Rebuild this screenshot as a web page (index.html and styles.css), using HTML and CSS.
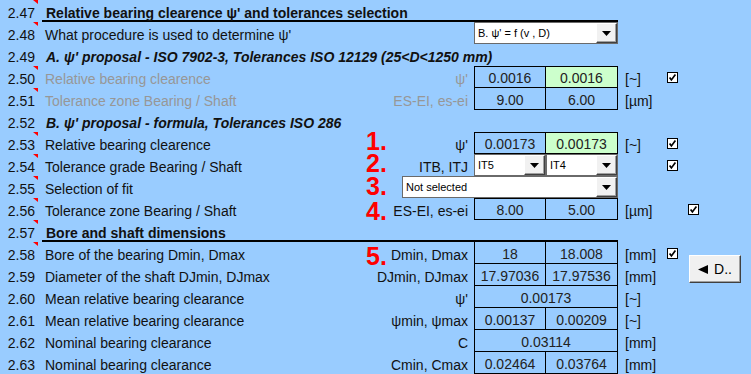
FILE: index.html
```html
<!DOCTYPE html>
<html>
<head>
<meta charset="utf-8">
<link rel="stylesheet" href="styles.css">
</head>
<body>
<div class="sheet">
  <div class="row">
    <div class="num mark">2.47</div>
    <div class="head">Relative bearing clearence ψ' and tolerances selection</div>
  </div>
  <div class="row">
    <div class="num mark">2.48</div>
    <div class="label span2">What procedure is used to determine ψ'</div>
    <div class="dd dd-main"><span class="dd-text">B. ψ' = f (v , D)</span><span class="dd-btn"><svg width="9" height="5" viewBox="0 0 9 5"><path d="M0 0H9L4.5 5Z"/></svg></span></div>
  </div>
  <div class="row">
    <div class="num">2.49</div>
    <div class="label sub">A. ψ' proposal - ISO 7902-3, Tolerances ISO 12129 (25&lt;D&lt;1250 mm)</div>
  </div>
  <div class="row">
    <div class="num mark">2.50</div>
    <div class="label muted">Relative bearing clearence</div>
    <div class="rlabel muted">ψ'</div>
    <div class="val c1 top">0.0016</div>
    <div class="val c2 top green">0.0016</div>
    <div class="unit">[~]</div>
    <div class="chk"><svg width="11" height="11" viewBox="0 0 11 11"><rect x="0.5" y="0.5" width="10" height="10" fill="#fff" stroke="#000"/><path d="M2.6 5.4L4.4 7.9L8.4 2.6" fill="none" stroke="#000" stroke-width="1.7"/></svg></div>
  </div>
  <div class="row">
    <div class="num mark">2.51</div>
    <div class="label muted">Tolerance zone Bearing / Shaft</div>
    <div class="rlabel muted">ES-EI, es-ei</div>
    <div class="val c1">9.00</div>
    <div class="val c2">6.00</div>
    <div class="unit">[µm]</div>
  </div>
  <div class="row">
    <div class="num">2.52</div>
    <div class="label sub">B. ψ' proposal - formula, Tolerances ISO 286</div>
  </div>
  <div class="row">
    <div class="num mark">2.53</div>
    <div class="label">Relative bearing clearence</div>
    <div class="rlabel"><span class="redn n1">1.</span>ψ'</div>
    <div class="val c1 top">0.00173</div>
    <div class="val c2 top green">0.00173</div>
    <div class="unit">[~]</div>
    <div class="chk"><svg width="11" height="11" viewBox="0 0 11 11"><rect x="0.5" y="0.5" width="10" height="10" fill="#fff" stroke="#000"/><path d="M2.6 5.4L4.4 7.9L8.4 2.6" fill="none" stroke="#000" stroke-width="1.7"/></svg></div>
  </div>
  <div class="row">
    <div class="num mark">2.54</div>
    <div class="label">Tolerance grade Bearing / Shaft</div>
    <div class="rlabel"><span class="redn n2">2.</span>ITB, ITJ</div>
    <div class="dd dd-c1"><span class="dd-text">IT5</span><span class="dd-btn"><svg width="9" height="5" viewBox="0 0 9 5"><path d="M0 0H9L4.5 5Z"/></svg></span></div>
    <div class="dd dd-c2"><span class="dd-text">IT4</span><span class="dd-btn"><svg width="9" height="5" viewBox="0 0 9 5"><path d="M0 0H9L4.5 5Z"/></svg></span></div>
    <div class="chk"><svg width="11" height="11" viewBox="0 0 11 11"><rect x="0.5" y="0.5" width="10" height="10" fill="#fff" stroke="#000"/><path d="M2.6 5.4L4.4 7.9L8.4 2.6" fill="none" stroke="#000" stroke-width="1.7"/></svg></div>
  </div>
  <div class="row">
    <div class="num mark">2.55</div>
    <div class="label">Selection of fit</div>
    <div class="rlabel"><span class="redn n3">3.</span></div>
    <div class="dd dd-fit"><span class="dd-text">Not selected</span><span class="dd-btn"><svg width="9" height="5" viewBox="0 0 9 5"><path d="M0 0H9L4.5 5Z"/></svg></span></div>
  </div>
  <div class="row">
    <div class="num mark">2.56</div>
    <div class="label">Tolerance zone Bearing / Shaft</div>
    <div class="rlabel"><span class="redn n4">4.</span>ES-EI, es-ei</div>
    <div class="val c1 top">8.00</div>
    <div class="val c2 top">5.00</div>
    <div class="unit">[µm]</div>
    <div class="chk chk-far"><svg width="11" height="11" viewBox="0 0 11 11"><rect x="0.5" y="0.5" width="10" height="10" fill="#fff" stroke="#000"/><path d="M2.6 5.4L4.4 7.9L8.4 2.6" fill="none" stroke="#000" stroke-width="1.7"/></svg></div>
  </div>
  <div class="row">
    <div class="num mark">2.57</div>
    <div class="head">Bore and shaft dimensions</div>
  </div>
  <div class="row">
    <div class="num mark">2.58</div>
    <div class="label">Bore of the bearing Dmin, Dmax</div>
    <div class="rlabel"><span class="redn n5">5.</span>Dmin, Dmax</div>
    <div class="val c1">18</div>
    <div class="val c2">18.008</div>
    <div class="unit">[mm]</div>
    <div class="chk"><svg width="11" height="11" viewBox="0 0 11 11"><rect x="0.5" y="0.5" width="10" height="10" fill="#fff" stroke="#000"/><path d="M2.6 5.4L4.4 7.9L8.4 2.6" fill="none" stroke="#000" stroke-width="1.7"/></svg></div>
  </div>
  <div class="row">
    <div class="num">2.59</div>
    <div class="label">Diameter of the shaft DJmin, DJmax</div>
    <div class="rlabel">DJmin, DJmax</div>
    <div class="val c1">17.97036</div>
    <div class="val c2">17.97536</div>
    <div class="unit">[mm]</div>
  </div>
  <div class="row">
    <div class="num">2.60</div>
    <div class="label">Mean relative bearing clearance</div>
    <div class="rlabel">ψ'</div>
    <div class="val merged">0.00173</div>
    <div class="unit">[~]</div>
  </div>
  <div class="row">
    <div class="num">2.61</div>
    <div class="label">Mean relative bearing clearance</div>
    <div class="rlabel">ψmin, ψmax</div>
    <div class="val c1">0.00137</div>
    <div class="val c2">0.00209</div>
    <div class="unit">[~]</div>
  </div>
  <div class="row">
    <div class="num">2.62</div>
    <div class="label">Nominal bearing clearance</div>
    <div class="rlabel">C</div>
    <div class="val merged">0.03114</div>
    <div class="unit">[mm]</div>
  </div>
  <div class="row">
    <div class="num">2.63</div>
    <div class="label">Nominal bearing clearance</div>
    <div class="rlabel">Cmin, Cmax</div>
    <div class="val c1">0.02464</div>
    <div class="val c2">0.03764</div>
    <div class="unit">[mm]</div>
  </div>
  <div class="btn"><svg width="10" height="9" viewBox="0 0 10 9"><path d="M0 4.5L10 0V9Z"/></svg><span>D..</span></div>
</div>
</body>
</html>
```

FILE: styles.css
```css
* { box-sizing: border-box; }
html, body {
  margin: 0;
  padding: 0;
  background: #99ccff;
  overflow: hidden;
}
.sheet {
  position: relative;
  width: 751px;
  height: 374px;
  font-family: "Liberation Sans", Arial, sans-serif;
  font-size: 14px;
  color: #111;
}
.row {
  display: grid;
  grid-template-columns: 38px 324px 112px 72px 72px 44px 1fr;
  grid-template-rows: 22px;
  height: 22px;
}
.row > div { grid-row: 1; white-space: nowrap; }
.num {
  grid-column: 1;
  position: relative;
  text-align: right;
  padding-right: 3px;
  padding-top: 4px;
  line-height: 18px;
}
.mark::after {
  content: "";
  position: absolute;
  top: 0;
  right: 0;
  width: 0;
  height: 0;
  border-top: 4px solid #ff0000;
  border-left: 5px solid transparent;
}
.label {
  grid-column: 2;
  padding-left: 7px;
  padding-top: 4px;
  line-height: 18px;
}
.label.span2 { grid-column: 2 / 4; }
.label.sub {
  grid-column: 2 / -1;
  font-weight: bold;
  font-style: italic;
  padding-left: 8px;
}
.head {
  grid-column: 2 / 6;
  margin-left: 4px;
  padding-left: 4px;
  padding-top: 4px;
  line-height: 18px;
  font-weight: bold;
  border-bottom: 2px solid #000;
}
.muted { color: #979797; }
.rlabel {
  grid-column: 3;
  position: relative;
  text-align: right;
  padding-right: 6px;
  padding-top: 4px;
  line-height: 18px;
}
.redn {
  position: absolute;
  left: 4px;
  font-size: 25px;
  line-height: 20px;
  font-weight: bold;
  color: #ff0000;
}
.n1 { top: -1px; }
.n2 { top: -1px; }
.n3 { top: 0; }
.n4 { top: 3px; }
.n5 { top: 4px; }
.val {
  text-align: center;
  padding-top: 3px;
  line-height: 18px;
  border-right: 1px solid #000;
  border-bottom: 1px solid #000;
  color: #222;
}
.val.top { border-top: 1px solid #000; padding-top: 2px; }
.c1 { grid-column: 4; border-left: 1px solid #000; }
.c2 { grid-column: 5; }
.merged { grid-column: 4 / 6; border-left: 1px solid #000; }
.green { background: #ccffcc; }
.unit {
  grid-column: 6;
  padding-left: 7px;
  padding-top: 4px;
  line-height: 18px;
}
.chk {
  grid-column: 7;
  display: flex;
  align-items: center;
  padding-left: 5px;
}
.chk svg { display: block; }
.chk-far { padding-left: 26px; }
.dd {
  display: flex;
  align-items: stretch;
  background: #fff;
  border: 1px solid #6a6a6a;
  font-size: 11px;
  color: #000;
}
.dd-text {
  flex: 1;
  padding-left: 3px;
  display: flex;
  align-items: center;
}
.dd-btn {
  width: 21px;
  display: flex;
  align-items: center;
  justify-content: center;
  background: #f1f1f1;
  border-top: 1px solid #fff;
  border-left: 1px solid #fff;
  border-right: 1px solid #404040;
  border-bottom: 1px solid #404040;
  box-shadow: inset -1px -1px 0 #a0a0a0;
}
.dd-btn svg { display: block; }
.dd-main { grid-column: 4 / 6; }
.dd-c1 { grid-column: 4; }
.dd-c2 { grid-column: 5; }
.dd-fit { grid-column: 3 / 6; margin-left: 40px; }
.btn {
  position: absolute;
  left: 689px;
  top: 255px;
  width: 52px;
  height: 28px;
  display: flex;
  align-items: center;
  justify-content: center;
  gap: 6px;
  background: #f0f0f0;
  border-top: 1px solid #fff;
  border-left: 1px solid #fff;
  border-right: 1px solid #404040;
  border-bottom: 1px solid #404040;
  box-shadow: inset -1px -1px 0 #a0a0a0;
  color: #000;
  font-size: 14px;
}
.btn svg { display: block; }
```
